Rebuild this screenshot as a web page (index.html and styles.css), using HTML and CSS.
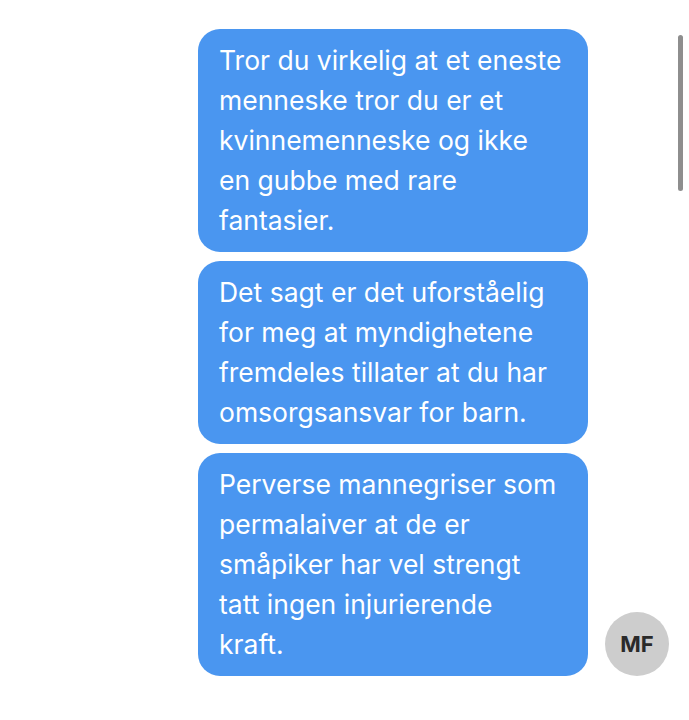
FILE: index.html
```html
<!DOCTYPE html>
<html lang="no">
<head>
<meta charset="utf-8">
<link rel="stylesheet" href="styles.css">
</head>
<body>
<div class="thread">
  <div class="row">
    <div class="bubble">Tror du virkelig at et eneste<br>menneske tror du er et<br>kvinnemenneske og ikke<br>en gubbe med rare<br>fantasier.</div>
  </div>
  <div class="row">
    <div class="bubble">Det sagt er det uforståelig<br>for meg at myndighetene<br>fremdeles tillater at du har<br>omsorgsansvar for barn.</div>
  </div>
  <div class="row">
    <div class="bubble">Perverse mannegriser som<br>permalaiver at de er<br>småpiker har vel strengt<br>tatt ingen injurierende<br>kraft.</div>
    <div class="avatar">MF</div>
  </div>
</div>
<div class="scrollbar"></div>
</body>
</html>
```
FILE: styles.css
```css
html, body {
  margin: 0;
  padding: 0;
  background: #ffffff;
}
body {
  width: 689px;
  height: 720px;
  overflow: hidden;
  position: relative;
  font-family: Inter, "Open Sans", sans-serif;
}
.thread {
  display: flex;
  flex-direction: column;
  gap: 9px;
  padding: 29px 0 0 198px;
}
.row {
  display: flex;
  align-items: flex-end;
  gap: 17px;
}
.bubble {
  width: 390px;
  box-sizing: border-box;
  background: #4a96f0;
  color: #ffffff;
  border-radius: 22px;
  padding: 11px 6px 12px 21px;
  font-size: 26.5px;
  line-height: 40px;
  letter-spacing: 0;
}
.avatar {
  width: 64px;
  height: 64px;
  border-radius: 50%;
  background: #cdcdcd;
  color: #2a2a2a;
  font-weight: 700;
  font-size: 22px;
  display: flex;
  align-items: center;
  justify-content: center;
  flex-shrink: 0;
}
.scrollbar {
  position: absolute;
  left: 678px;
  top: 35px;
  width: 5px;
  height: 156px;
  border-radius: 3px;
  background: #8e8e8e;
}
```
